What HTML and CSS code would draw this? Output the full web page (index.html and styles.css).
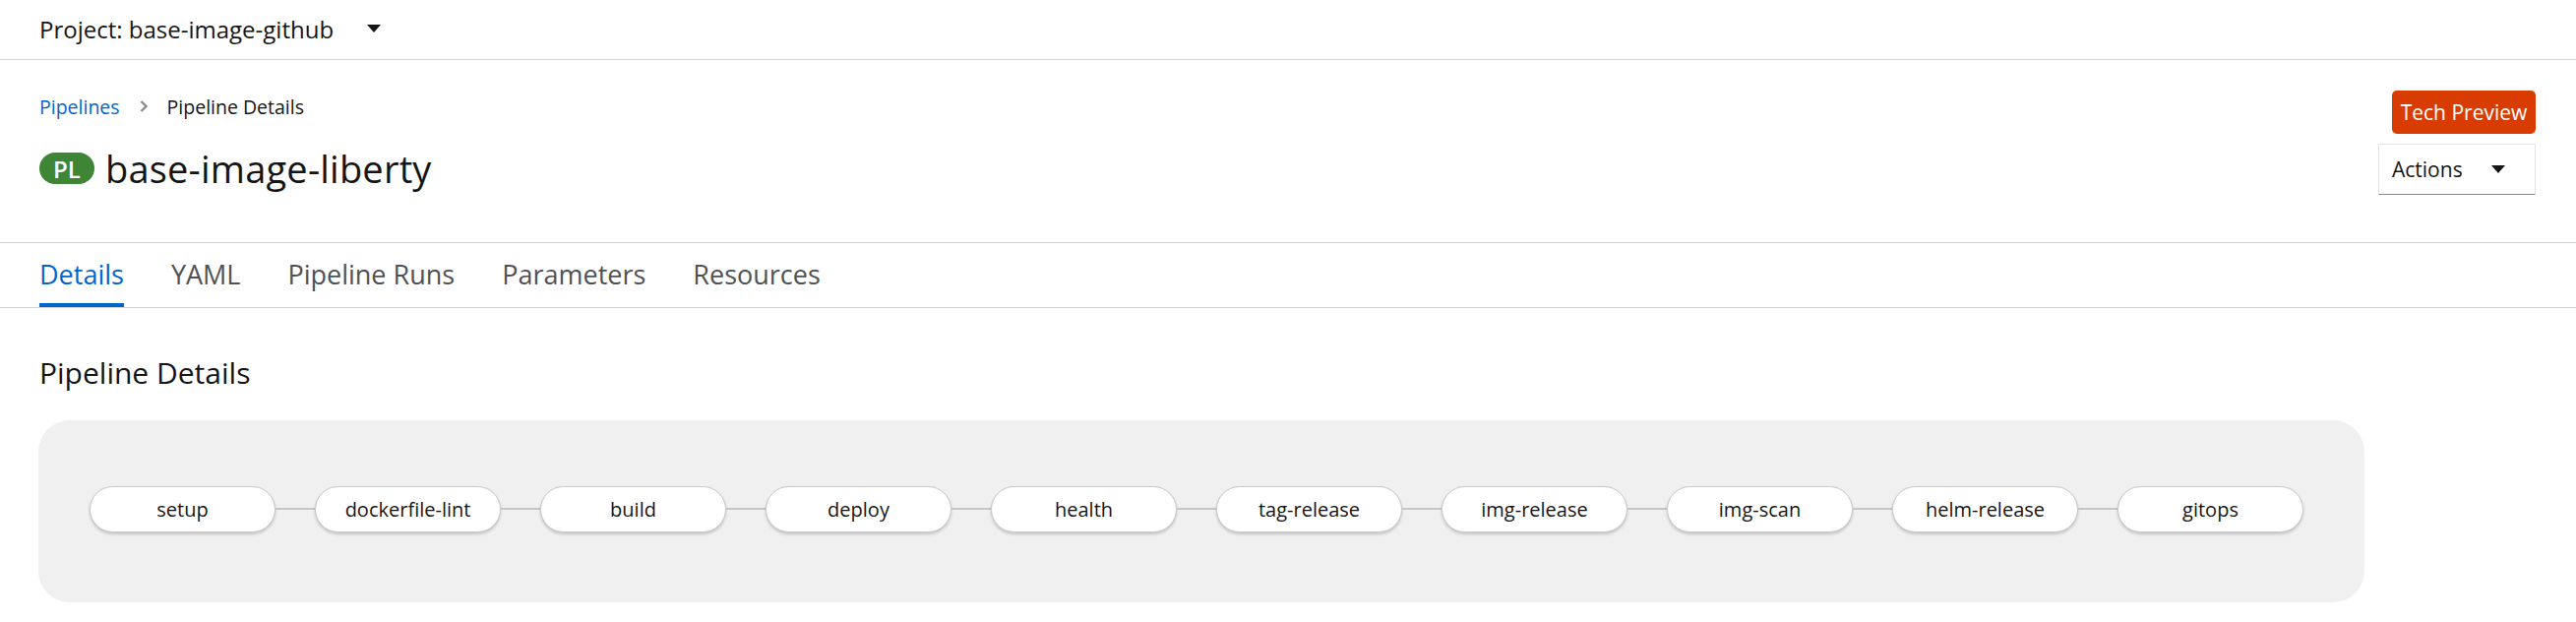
FILE: index.html
```html
<!DOCTYPE html>
<html>
<head>
<meta charset="utf-8">
<link rel="stylesheet" href="styles.css">
</head>
<body>
<div class="project-bar">
  <span class="project-name">Project: base-image-github</span>
  <svg class="caret" width="14" height="8" viewBox="0 0 14 8"><path d="M0 0h14L7 8z" fill="#151515"/></svg>
</div>
<div class="page-header">
  <div class="header-left">
    <nav class="breadcrumb">
      <a class="crumb-link">Pipelines</a>
      <svg class="crumb-sep" width="8" height="12" viewBox="0 0 8 12"><path d="M1.5 1l5 5-5 5" stroke="#8a8d90" stroke-width="2.4" fill="none"/></svg>
      <span class="crumb-current">Pipeline Details</span>
    </nav>
    <h1 class="title"><span class="badge">PL</span><span class="title-text">base-image-liberty</span></h1>
  </div>
  <div class="header-right">
    <span class="tech-preview">Tech Preview</span>
    <button class="actions">Actions <svg class="caret" width="14" height="8" viewBox="0 0 14 8"><path d="M0 0h14L7 8z" fill="#151515"/></svg></button>
  </div>
</div>
<div class="tabs">
  <a class="tab active">Details</a>
  <a class="tab">YAML</a>
  <a class="tab">Pipeline Runs</a>
  <a class="tab">Parameters</a>
  <a class="tab">Resources</a>
</div>
<div class="section">
  <h2 class="section-title">Pipeline Details</h2>
  <div class="pipeline">
    <div class="node">setup</div><div class="edge"></div>
    <div class="node">dockerfile-lint</div><div class="edge"></div>
    <div class="node">build</div><div class="edge"></div>
    <div class="node">deploy</div><div class="edge"></div>
    <div class="node">health</div><div class="edge"></div>
    <div class="node">tag-release</div><div class="edge"></div>
    <div class="node">img-release</div><div class="edge"></div>
    <div class="node">img-scan</div><div class="edge"></div>
    <div class="node">helm-release</div><div class="edge"></div>
    <div class="node">gitops</div>
  </div>
</div>
</body>
</html>
```
FILE: styles.css
```css
* { box-sizing: border-box; }
body {
  margin: 0;
  font-family: "Open Sans", "Noto Sans", "Liberation Sans", sans-serif;
  color: #151515;
  background: #fff;
}
.project-bar {
  height: 61px;
  border-bottom: 1px solid #d2d2d2;
  display: flex;
  align-items: center;
  padding-left: 40px;
  padding-bottom: 2px;
}
.project-name {
  font-size: 24px;
}
.project-bar .caret {
  margin-left: 34px;
}
.page-header {
  display: flex;
  justify-content: space-between;
  padding: 32px 41px 0 40px;
  height: 186px;
  border-bottom: 1px solid #d2d2d2;
}
.breadcrumb {
  display: flex;
  align-items: center;
  font-size: 19.5px;
  height: 30px;
}
.crumb-link { color: #0066cc; }
.crumb-sep { margin: 0 20px; }
.title {
  margin: 22px 0 0;
  display: flex;
  align-items: center;
  font-size: 38px;
  font-weight: 500;
  letter-spacing: 0.2px;
}
.badge {
  display: inline-flex;
  align-items: center;
  justify-content: center;
  width: 56px;
  height: 32px;
  border-radius: 16px;
  background: #3e8635;
  color: #fff;
  font-size: 24px;
  font-weight: 600;
  letter-spacing: 0;
  margin-right: 11px;
}
.header-right {
  display: flex;
  flex-direction: column;
  align-items: flex-end;
}
.tech-preview {
  display: inline-flex;
  align-items: center;
  justify-content: center;
  width: 146px;
  height: 44px;
  background: #d83c00;
  color: #fff;
  border-radius: 5px;
  font-size: 21px;
  margin-top: -1px;
}
.actions {
  margin-top: 10px;
  width: 160px;
  height: 52px;
  background: #fff;
  border: 1px solid #e6e6e6;
  border-bottom-color: #8a8d90;
  font-family: inherit;
  font-size: 21px;
  color: #151515;
  display: flex;
  align-items: center;
  justify-content: space-between;
  padding: 0 30px 0 13px;
}
.tabs {
  display: flex;
  gap: 48px;
  padding: 0 40px;
  height: 66px;
  border-bottom: 1px solid #d2d2d2;
}
.tab {
  font-size: 27px;
  color: #4f5255;
  display: flex;
  align-items: center;
  padding-top: 2px;
  border-bottom: 4px solid transparent;
}
.tab.active {
  color: #0066cc;
  border-bottom-color: #0066cc;
}
.section {
  padding: 0 40px;
}
.section-title {
  margin: 46px 0 0;
  font-size: 30px;
  font-weight: 500;
  line-height: 40px;
}
.pipeline {
  margin-top: 28px;
  width: 2364px;
  height: 185px;
  margin-left: -1px;
  background: #f0f0f0;
  border-radius: 32px;
  display: flex;
  align-items: center;
  padding-left: 52px;
  padding-bottom: 5px;
}
.node {
  width: 189px;
  height: 47px;
  flex: none;
  border-radius: 24px;
  background: #fff;
  border: 1px solid #c8c8c8;
  box-shadow: 0 2px 3px rgba(0,0,0,0.18);
  display: flex;
  align-items: center;
  justify-content: center;
  font-size: 20px;
}
.edge {
  width: 40px;
  height: 2px;
  background: #c4c6c8;
  flex: none;
}
```
